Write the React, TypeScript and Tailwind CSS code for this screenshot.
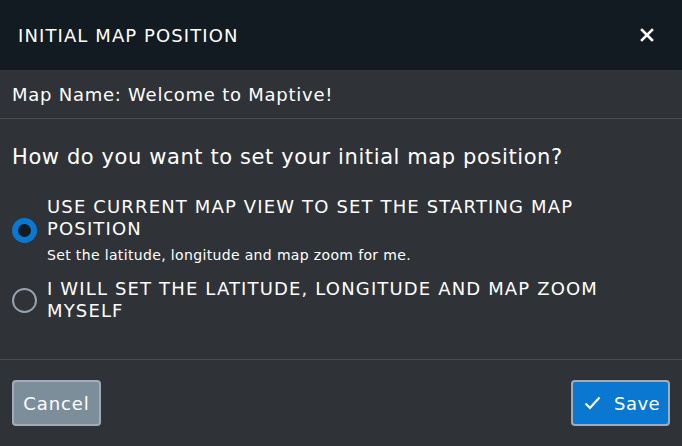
import React, { useState } from 'react';

export default function App() {
  const [choice, setChoice] = useState<'current' | 'manual'>('current');

  const options = [
    {
      key: 'current' as const,
      label: 'USE CURRENT MAP VIEW TO SET THE STARTING MAP POSITION',
      hint: 'Set the latitude, longitude and map zoom for me.',
    },
    {
      key: 'manual' as const,
      label: 'I WILL SET THE LATITUDE, LONGITUDE AND MAP ZOOM MYSELF',
    },
  ];

  return (
    <div className="w-[682px] h-[446px] flex flex-col bg-[#2f3338] text-white font-['DejaVu_Sans',sans-serif]">
      {/* Header */}
      <div className="h-[70px] shrink-0 flex items-center justify-between bg-[#121b22] pl-[18px] pr-[27px]">
        <span className="text-[18px] tracking-[1.1px]">INITIAL MAP POSITION</span>
        <button aria-label="Close" className="w-[16px] h-[16px] flex items-center justify-center">
          <svg width="14" height="14" viewBox="0 0 14 14" fill="none" stroke="white" strokeWidth="2.6" strokeLinecap="square">
            <path d="M2 2L12 12M12 2L2 12" />
          </svg>
        </button>
      </div>

      {/* Map name */}
      <div className="h-[49px] shrink-0 flex items-center px-[12px] border-b border-[#474c52] text-[18px] tracking-[0.75px]">
        Map Name: Welcome to Maptive!
      </div>

      {/* Body */}
      <div className="flex-1 px-[12px] pt-[24px] border-b border-[#474c52]">
        <div className="text-[21px] leading-[28px] tracking-[0.6px]">How do you want to set your initial map position?</div>
        <div className="mt-[25px] flex flex-col gap-[14px]">
          {options.map((o) => {
            const selected = choice === o.key;
            return (
              <label key={o.key} className="flex items-center gap-[10px] cursor-pointer" onClick={() => setChoice(o.key)}>
                <span
                  className={`w-[25px] h-[25px] shrink-0 rounded-full flex items-center justify-center ${
                    selected ? 'bg-[#0a78d1]' : 'border-2 border-[#97a2ad]'
                  }`}
                >
                  {selected && <span className="w-[13px] h-[13px] rounded-full bg-[#121b22]" />}
                </span>
                <span className="flex flex-col">
                  <span className="text-[18px] leading-[22px] tracking-[1.15px]">{o.label}</span>
                  {o.hint && <span className="text-[14px] leading-[18px] mt-[6px] tracking-[0.35px]">{o.hint}</span>}
                </span>
              </label>
            );
          })}
        </div>
      </div>

      {/* Footer */}
      <div className="h-[86px] shrink-0 flex items-center justify-between px-[12px]">
        <button className="h-[46px] w-[89px] rounded-[4px] border-2 border-[#a1acb6] bg-[#7d8e9b] text-[18px] tracking-[0.9px]">
          Cancel
        </button>
        <button className="h-[46px] w-[99px] pl-[11px] rounded-[4px] border-2 border-[#a1acb6] bg-[#0a78d1] text-[18px] tracking-[0.5px] flex items-center gap-[13px]">
          <svg width="17" height="14" viewBox="0 0 17 14" fill="none" stroke="white" strokeWidth="2.2">
            <path d="M1.5 7.5L6 12L15.5 1.5" />
          </svg>
          Save
        </button>
      </div>
    </div>
  );
}
